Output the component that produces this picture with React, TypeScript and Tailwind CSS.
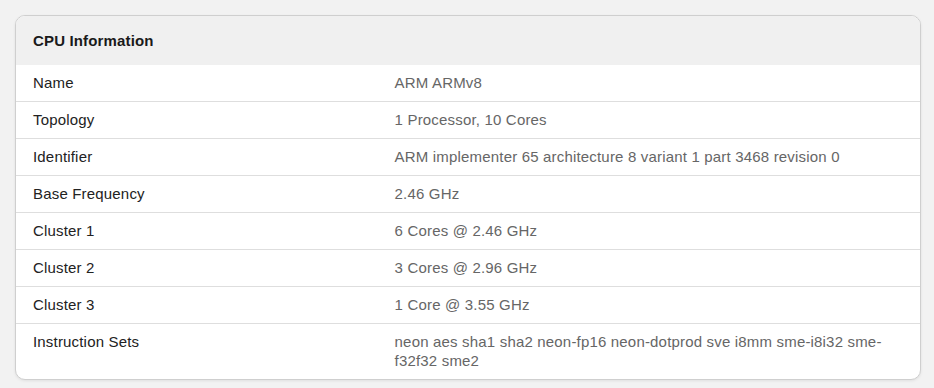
import React from "react";

const rows: [string, string][] = [
  ["Name", "ARM ARMv8"],
  ["Topology", "1 Processor, 10 Cores"],
  ["Identifier", "ARM implementer 65 architecture 8 variant 1 part 3468 revision 0"],
  ["Base Frequency", "2.46 GHz"],
  ["Cluster 1", "6 Cores @ 2.46 GHz"],
  ["Cluster 2", "3 Cores @ 2.96 GHz"],
  ["Cluster 3", "1 Core @ 3.55 GHz"],
  ["Instruction Sets", "neon aes sha1 sha2 neon-fp16 neon-dotprod sve i8mm sme-i8i32 sme-f32f32 sme2"],
];

export default function App() {
  return (
    <div
      className="w-full h-[388px] bg-[#f2f2f2] pt-[15px] pl-[15px]"
      style={{ fontFamily: '"Liberation Sans", Arial, sans-serif' }}
    >
      <div className="w-[906px] bg-white border border-[#cfcfcf] rounded-[10px] overflow-hidden shadow-[0_1px_3px_rgba(0,0,0,0.08)]">
        <div className="bg-[#f0f0f0] h-[49px] flex items-center px-[17px] pt-[2px]">
          <h2 className="text-[15px] font-bold text-[#1a1a1a] tracking-[0.15px]">CPU Information</h2>
        </div>
        <table className="w-full border-collapse text-[15px] leading-[19px] tracking-[0.18px]">
          <tbody>
            {rows.map(([label, value], i) => (
              <tr key={label} className={i < rows.length - 1 ? "border-b border-[#dedede]" : ""}>
                <td className="w-[40%] px-[17px] pt-[8px] pb-[9px] align-top text-[#222]">{label}</td>
                <td className="px-[17px] pt-[8px] pb-[9px] align-top text-[#666] pr-[18px]">{value}</td>
              </tr>
            ))}
          </tbody>
        </table>
      </div>
    </div>
  );
}
